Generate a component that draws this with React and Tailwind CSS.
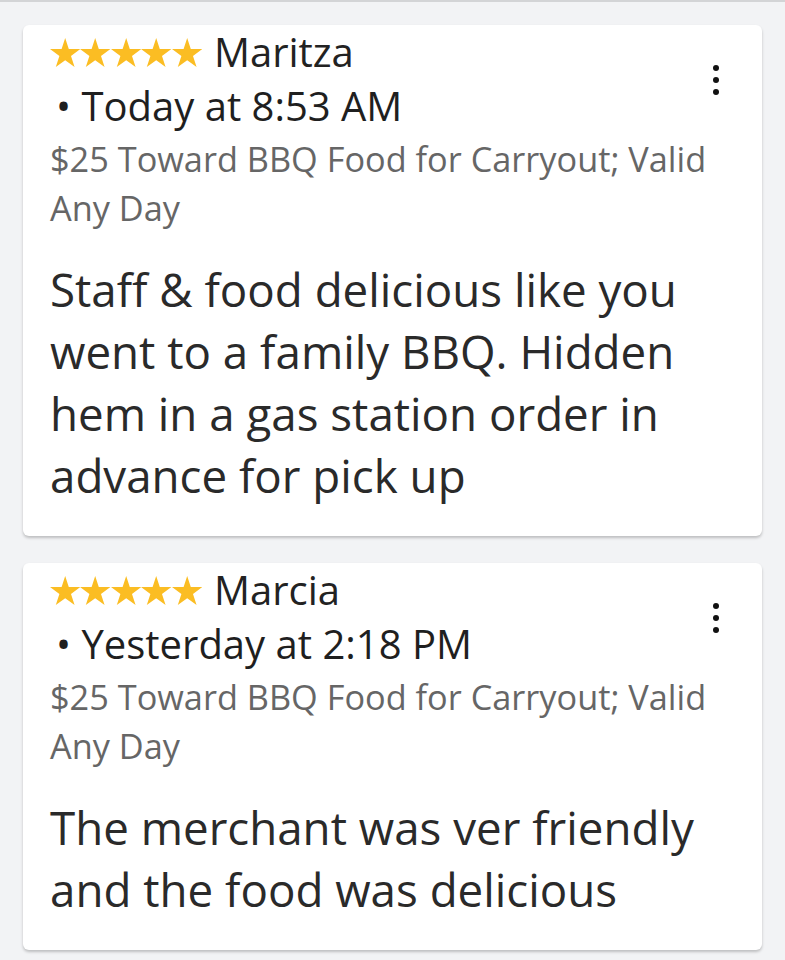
import React from 'react';

const reviews = [
  {
    name: 'Maritza',
    date: 'Today at 8:53 AM',
    deal: '$25 Toward BBQ Food for Carryout; Valid Any Day',
    text: 'Staff & food delicious like you went to a family BBQ. Hidden hem in a gas station order in advance for pick up',
  },
  {
    name: 'Marcia',
    date: 'Yesterday at 2:18 PM',
    deal: '$25 Toward BBQ Food for Carryout; Valid Any Day',
    text: 'The merchant was ver friendly and the food was delicious',
  },
];

const Star = () => (
  <svg width="30.4" height="29" viewBox="0 0 100 95.1" className="block">
    <polygon
      fill="#fbbd23"
      points="50,0 61.8,36.3 100,36.3 69.1,58.8 80.9,95.1 50,72.7 19.1,95.1 30.9,58.8 0,36.3 38.2,36.3"
    />
  </svg>
);

const ReviewCard = ({ review }) => {
  return (
    <div className="relative bg-white rounded-md shadow-[0_2px_3px_rgba(0,0,0,0.22)] pl-[27px] pr-[50px] pt-[3px] pb-[30px]">
      <div className="flex items-center h-[48px]">
        <div className="flex">
          {[0, 1, 2, 3, 4].map((i) => (
            <Star key={i} />
          ))}
        </div>
        <span className="ml-[12px] text-[40px] leading-[48px] text-[#222]">{review.name}</span>
      </div>
      <div className="mt-[3px] ml-[6px] text-[40px] leading-[54px] text-[#1f1f1f]">• {review.date}</div>
      <p className="mt-[1px] text-[34.3px] leading-[49px] text-[#666]">{review.deal}</p>
      <p className="mt-[26px] text-[45.7px] leading-[62px] text-[#2a2a2a]">{review.text}</p>
      <div className="absolute right-[43px] top-[40px] flex flex-col gap-[6px]">
        <span className="block w-[6px] h-[6px] rounded-full bg-[#111]" />
        <span className="block w-[6px] h-[6px] rounded-full bg-[#111]" />
        <span className="block w-[6px] h-[6px] rounded-full bg-[#111]" />
      </div>
    </div>
  );
};

const App = () => {
  return (
    <div
      className="w-[785px] h-[960px] overflow-hidden bg-[#f2f3f5] border-t-2 border-[#d3d4d6]"
      style={{ fontFamily: '"Open Sans", sans-serif' }}
    >
      <div className="px-[23px] pt-[23px] flex flex-col gap-[27px]">
        {reviews.map((review, index) => (
          <ReviewCard key={index} review={review} />
        ))}
      </div>
    </div>
  );
};

export default App;
